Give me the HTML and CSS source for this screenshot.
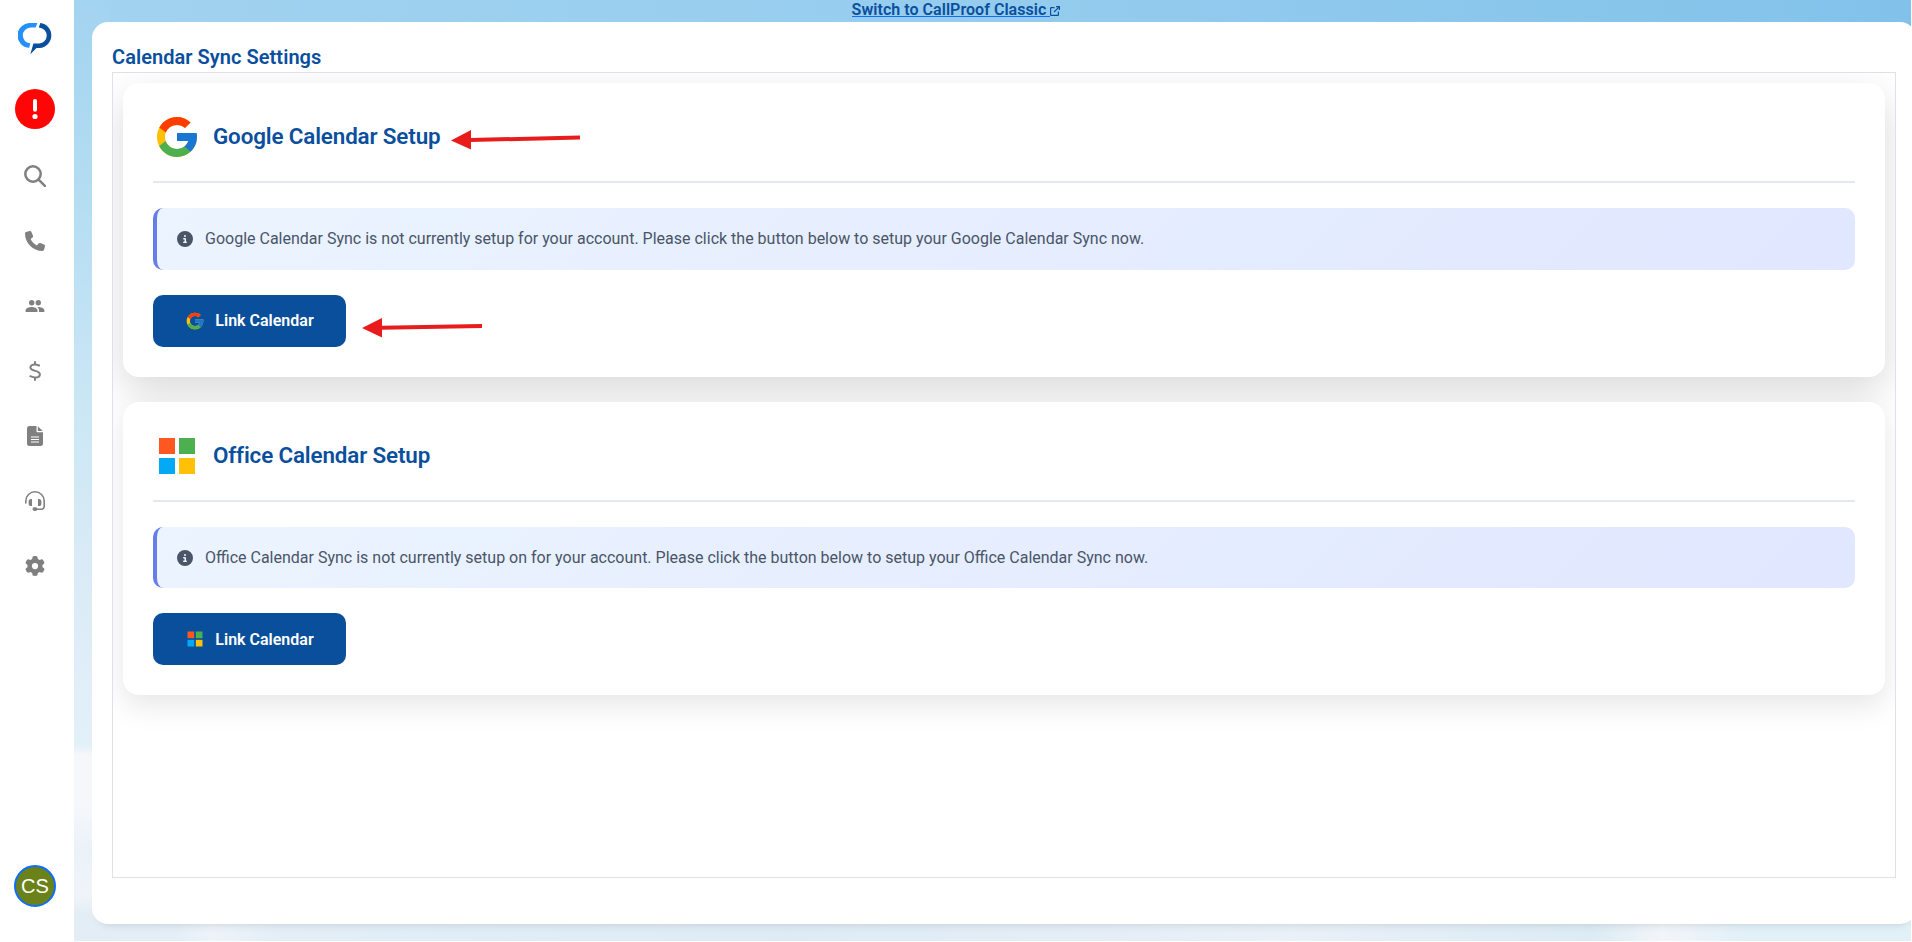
FILE: index.html
```html
<!DOCTYPE html>
<html lang="en">
<head>
    <meta charset="UTF-8">
    <meta name="viewport" content="width=device-width, initial-scale=1.0">
    <title>Calendar Sync Settings</title>
    <link rel="stylesheet" href="styles.css">
</head>
<body>

    <!-- shared icons -->
    <svg class="sprite" xmlns="http://www.w3.org/2000/svg">
        <symbol id="google" viewBox="0 0 48 48">
            <path fill="#FFC107" d="M43.611 20.083H42V20H24v8h11.303c-1.649 4.657-6.08 8-11.303 8-6.627 0-12-5.373-12-12s5.373-12 12-12c3.059 0 5.842 1.154 7.961 3.039l5.657-5.657C34.046 6.053 29.268 4 24 4 12.955 4 4 12.955 4 24s8.955 20 20 20 20-8.955 20-20c0-1.341-.138-2.65-.389-3.917z"/>
            <path fill="#FF3D00" d="M6.306 14.691l6.571 4.819C14.655 15.108 18.961 12 24 12c3.059 0 5.842 1.154 7.961 3.039l5.657-5.657C34.046 6.053 29.268 4 24 4 16.318 4 9.656 8.337 6.306 14.691z"/>
            <path fill="#4CAF50" d="M24 44c5.166 0 9.86-1.977 13.409-5.192l-6.19-5.238C29.211 35.091 26.715 36 24 36c-5.202 0-9.619-3.317-11.283-7.946l-6.522 5.025C9.505 39.556 16.227 44 24 44z"/>
            <path fill="#1976D2" d="M43.611 20.083H42V20H24v8h11.303c-.792 2.237-2.231 4.166-4.087 5.571l6.193 5.238C36.971 39.205 44 34 44 24c0-1.341-.138-2.65-.389-3.917z"/>
        </symbol>
        <symbol id="microsoft" viewBox="0 0 48 48">
            <path fill="#FF5722" d="M6 6h16v16H6z"/>
            <path fill="#4CAF50" d="M26 6h16v16H26z"/>
            <path fill="#03A9F4" d="M6 26h16v16H6z"/>
            <path fill="#FFC107" d="M26 26h16v16H26z"/>
        </symbol>
        <symbol id="info" viewBox="0 0 512 512">
            <path d="M256 512A256 256 0 1 0 256 0a256 256 0 1 0 0 512zM216 336h24V272H216c-13.300 0-24-10.700-24-24s10.700-24 24-24h48c13.300 0 24 10.700 24 24v88h8c13.300 0 24 10.700 24 24s-10.700 24-24 24H216c-13.300 0-24-10.700-24-24s10.700-24 24-24zm40-208a32 32 0 1 1 0 64 32 32 0 1 1 0-64z"/>
        </symbol>
    </svg>

    <aside class="sidebar">
        <a class="logo" href="#">
            <svg width="34" height="32" viewBox="0 0 34 32">
                <path d="M19.300 0L17.700 4.600H12.500A7.900 7.900 0 0 0 4.800 12.500A7.700 7.700 0 0 0 12.300 20.300L11.200 24.800A12.400 12.400 0 0 1 12.600 0Z" fill="#2490fb"/>
                <path d="M22.300 0A12.500 12.500 0 0 1 21.500 24.900H18.500L12.300 31.200L15.400 20.400H21.400A7.900 7.900 0 0 0 22 4.700L20.800 4.600Z" fill="#0a4f9e"/>
            </svg>
        </a>
        <a class="alert-badge" href="#">
            <svg width="40" height="40" viewBox="0 0 40 40">
                <path d="M20 12v8.800" stroke="#fff" stroke-width="4" stroke-linecap="round"/>
                <circle cx="20" cy="27.500" r="2.600" fill="#fff"/>
            </svg>
        </a>
        <nav class="nav">
            <a href="#"><svg class="line" width="22" height="22" viewBox="0 0 22 22" stroke-width="2.500"><circle cx="9" cy="9" r="7.700"/><path d="M14.600 14.600L21.200 21.200"/></svg></a>
            <a href="#"><svg width="20" height="20" viewBox="0 0 512 512"><path d="M164.900 24.600c-7.700-18.600-28-28.500-47.400-23.200l-88 24C12.100 30.200 0 46 0 64C0 311.400 200.600 512 448 512c18 0 33.800-12.100 38.600-29.500l24-88c5.300-19.400-4.600-39.700-23.200-47.400l-96-40c-16.300-6.800-35.200-2.100-46.300 11.600L304.700 368C234.300 334.700 177.300 277.700 144 207.300L193.300 167c13.700-11.200 18.400-30 11.600-46.300l-40-96z"/></svg></a>
            <a href="#"><svg width="20" height="14" viewBox="0 0 20 14"><circle cx="6.700" cy="3.700" r="2.700"/><circle cx="13.300" cy="3.700" r="2.700"/><path d="M6.700 7.900c2.200 0 5.800 1.100 5.800 3.400V13H.6V11.300C.6 9 4.500 7.900 6.700 7.900zM13.300 7.900c2.200 0 6.100 1.100 6.100 3.400V13H14V11.300c0-1.500-.8-2.600-1.900-3.300z"/></svg></a>
            <a href="#"><svg class="line" width="12" height="20" viewBox="0 0 12 20" stroke-width="2"><path d="M6 1v2.300M6 16.600v2.300M10 4.500C8.500 3.800 7.200 3.400 5.800 3.400C3.300 3.400 1.400 4.700 1.400 6.500C1.400 10.500 10.900 9.200 10.900 13.200C10.900 15.400 8.800 16.600 6.300 16.600C4.600 16.600 3 16 1.300 15.200"/></svg></a>
            <a href="#"><svg width="16" height="20" viewBox="0 0 16 20"><path d="M2.500 0H9.500V5.200A1 1 0 0 0 10.500 6.200H16V17.500A2.500 2.500 0 0 1 13.500 20H2.500A2.500 2.500 0 0 1 0 17.500V2.500A2.500 2.500 0 0 1 2.500 0Z"/><path d="M10.800.300L15.700 5H10.800Z"/><path d="M4 11h8M4 13.500h8M4 16h8" stroke="#fff" stroke-width="1.100"/></svg></a>
            <a href="#"><svg width="20" height="20" viewBox="0 0 20 20"><path d="M.8 12V10a9.200 9.200 0 0 1 18.400 0V15.500a2.700 2.700 0 0 1-2.700 2.700H10" fill="none" stroke="#808080" stroke-width="1.600" stroke-linecap="round"/><path d="M6.200 8h.8v7H6.200a2.600 2.600 0 0 1-2.600-2.600V10.600A2.600 2.600 0 0 1 6.200 8zM13.800 8H13v7h.8a2.600 2.600 0 0 0 2.600-2.600V10.600A2.600 2.600 0 0 0 13.800 8z"/><rect x="7.500" y="16.300" width="5" height="3.600" rx="1.800"/></svg></a>
            <a href="#"><svg width="20" height="20" viewBox="0 0 512 512"><path d="M495.900 166.600c3.200 8.700.5 18.400-6.400 24.600l-43.300 39.400c1.100 8.300 1.700 16.800 1.700 25.400s-.6 17.100-1.700 25.400l43.300 39.400c6.900 6.200 9.600 15.900 6.400 24.600c-4.400 11.900-9.700 23.300-15.800 34.300l-4.700 8.100c-6.600 11-14 21.400-22.100 31.200c-5.900 7.200-15.700 9.600-24.500 6.800l-55.700-17.700c-13.400 10.300-28.200 18.900-44 25.400l-12.500 57.100c-2 9.100-9 16.300-18.200 17.800c-13.800 2.300-28 3.500-42.500 3.500s-28.700-1.200-42.500-3.500c-9.200-1.500-16.200-8.700-18.200-17.800l-12.500-57.100c-15.800-6.500-30.600-15.100-44-25.400L83.100 425.900c-8.800 2.800-18.600.3-24.500-6.800c-8.100-9.800-15.500-20.200-22.100-31.200l-4.700-8.100c-6.100-11-11.400-22.400-15.800-34.300c-3.200-8.700-.5-18.400 6.400-24.600l43.300-39.400C64.600 273.100 64 264.600 64 256s.6-17.100 1.700-25.400L22.400 191.200c-6.900-6.200-9.600-15.900-6.400-24.600c4.400-11.900 9.700-23.300 15.800-34.300l4.700-8.100c6.600-11 14-21.400 22.100-31.200c5.900-7.200 15.700-9.600 24.500-6.800l55.700 17.700c13.400-10.300 28.200-18.900 44-25.400l12.500-57.100c2-9.100 9-16.300 18.200-17.800C227.300 1.200 241.500 0 256 0s28.700 1.200 42.500 3.500c9.200 1.500 16.200 8.700 18.200 17.800l12.500 57.100c15.800 6.500 30.600 15.100 44 25.400l55.700-17.700c8.800-2.800 18.600-.3 24.500 6.800c8.100 9.800 15.500 20.200 22.100 31.200l4.700 8.100c6.100 11 11.400 22.400 15.800 34.300zM256 336a80 80 0 1 0 0-160 80 80 0 1 0 0 160z"/></svg></a>
        </nav>
        <div class="avatar">CS</div>
    </aside>

    <div class="main">
        <div class="topbar">
            <a class="classic-link" href="#"><span>Switch to CallProof Classic </span><svg width="10" height="10" viewBox="0 0 10 10" fill="none" stroke="#0a4f9e" stroke-width="1.200"><path d="M4.500 1.600H1.200Q.6 1.600.6 2.200V8.800Q.6 9.400 1.200 9.400H7.800Q8.400 9.400 8.400 8.800V5.500M6 .6H9.400V4M9.200.8L4 6"/></svg></a>
        </div>

        <div class="panel">
            <h1>Calendar Sync Settings</h1>
            <div class="content">

                <section class="card active">
                    <div class="card-header">
                        <svg width="48" height="48"><use href="#google"/></svg>
                        <h2>Google Calendar Setup</h2>
                        <svg class="arrow arrow-title" width="130" height="22" viewBox="0 0 130 22">
                            <path d="M19 12L129 9.500" stroke="#e81c1c" stroke-width="4"/>
                            <path d="M0 12.500L20 2V21.500Z" fill="#e81c1c"/>
                        </svg>
                    </div>
                    <div class="notice">
                        <svg width="16" height="16"><use href="#info"/></svg>
                        <span>Google Calendar Sync is not currently setup for your account. Please click the button below to setup your Google Calendar Sync now.</span>
                    </div>
                    <div class="actions">
                        <button type="button"><svg width="20" height="20"><use href="#google"/></svg>Link Calendar</button>
                        <svg class="arrow arrow-button" width="120" height="22" viewBox="0 0 120 22">
                            <path d="M19 11.700L120 10" stroke="#e81c1c" stroke-width="4"/>
                            <path d="M0 12L20 2V21.500Z" fill="#e81c1c"/>
                        </svg>
                    </div>
                </section>

                <section class="card">
                    <div class="card-header">
                        <svg width="48" height="48"><use href="#microsoft"/></svg>
                        <h2>Office Calendar Setup</h2>
                    </div>
                    <div class="notice">
                        <svg width="16" height="16"><use href="#info"/></svg>
                        <span>Office Calendar Sync is not currently setup on for your account. Please click the button below to setup your Office Calendar Sync now.</span>
                    </div>
                    <div class="actions">
                        <button type="button"><svg width="20" height="20"><use href="#microsoft"/></svg>Link Calendar</button>
                    </div>
                </section>

            </div>
        </div>
    </div>

</body>
</html>
```
FILE: styles.css
```css
* {
    box-sizing: border-box;
}

body {
    margin: 0;
    height: 942px;
    display: flex;
    overflow: hidden;
    font-family: Roboto, "Liberation Sans", sans-serif;
    font-size: 16px;
    background-color: white;
}

svg {
    display: block;
    flex-shrink: 0;
}

.sprite {
    display: none;
}

/* sidebar */
.sidebar {
    width: 74px;
    flex-shrink: 0;
    padding: 23px 17px 35px 13px;
    display: flex;
    flex-direction: column;
    align-items: center;
    background-color: white;
}

.alert-badge {
    margin-top: 34px;
    width: 40px;
    height: 40px;
    border-radius: 50%;
    background-color: #ff0505;
}

.nav {
    margin-top: 14px;
    display: flex;
    flex-direction: column;
}

.nav a {
    height: 65px;
    display: flex;
    align-items: center;
    justify-content: center;
}

.nav svg {
    fill: #808080;
}

.nav .line {
    fill: none;
    stroke: #808080;
    stroke-linecap: round;
    stroke-linejoin: round;
}

.avatar {
    margin-top: auto;
    width: 42px;
    height: 42px;
    flex-shrink: 0;
    border: 2px solid #0d6efd;
    border-radius: 50%;
    background-color: #6a8219;
    color: white;
    font-family: "Liberation Sans", sans-serif;
    font-size: 20px;
    line-height: 39px;
    text-align: center;
}

/* sky background */
.main {
    width: 1837px;
    height: 941px;
    flex-shrink: 0;
    overflow: hidden;
    background:
        linear-gradient(to right, #e2edf6 0, #e3eef7 80px, #eef3f9 120px, #e3eef7 190px, #deebf5 700px, #e9f0f8 1200px, #dcebf4 1500px, #f2f5fa 1570px, #e2f0f8 1650px, #e2f0f8 100%) 18px 100% / 100% 24px no-repeat,
        linear-gradient(to bottom, #a2d3f0 0, #aedaf1 130px, #bee1f4 290px, #c5e4f5 350px, #cde8f5 430px, #dcecf7 600px, #e2f0f8 745px, #f6f7fb 755px, #f6f7fb 805px, #eaf2f8 850px, #f0f4f9 895px, #e2edf6 915px) 0 0 / 36px 100% no-repeat,
        linear-gradient(to right, #a2d3f0, #95ccee 50%, #82c2ea);
}

.topbar {
    height: 22px;
    padding-right: 73px;
    display: flex;
    justify-content: center;
}

.classic-link {
    height: 19px;
    display: flex;
    align-items: flex-end;
    color: #0a4f9e;
    font-weight: 600;
    text-decoration: none;
}

.classic-link span {
    height: 17px;
    margin-bottom: 2px;
    line-height: 19px;
    letter-spacing: 0.04px;
    white-space: pre;
    border-bottom: 1px solid #0d6efd;
}

.classic-link svg {
    margin-bottom: 3px;
}

.panel {
    width: 1824px;
    height: 902px;
    margin-left: 18px;
    padding: 20px 20px 0;
    border-radius: 16px;
    background-color: white;
    box-shadow: 0 8px 10px -8px rgba(0, 0, 0, 0.15);
}

h1 {
    margin: 0;
    height: 30px;
    color: #0a4f9e;
    font-size: 20px;
    font-weight: 600;
    line-height: 30px;
    letter-spacing: 0.05px;
}

.content {
    height: 806px;
    padding: 10px;
    overflow: hidden;
    border: 1px solid #dee2e6;
}

.card {
    margin-bottom: 25px;
    padding: 30px;
    border-radius: 16px;
    background-color: white;
    box-shadow: 0 10px 30px rgba(0, 0, 0, 0.1);
}

.card.active {
    box-shadow: 0 15px 40px rgba(0, 0, 0, 0.15);
}

.card-header {
    position: relative;
    display: flex;
    gap: 12px;
    margin-bottom: 25px;
    padding-bottom: 20px;
    border-bottom: 2px solid #e2e8f0;
}

h2 {
    margin: 0;
    color: #0a4f9e;
    font-size: 22.4px;
    font-weight: 600;
    line-height: 47px;
    letter-spacing: -0.14px;
}

.notice {
    display: flex;
    align-items: center;
    gap: 12px;
    margin-bottom: 25px;
    padding: 20px;
    border-left: 4px solid #667eea;
    border-radius: 10px;
    background: linear-gradient(135deg, #ebf4ff 0%, #e0e7ff 100%);
    color: #4a5568;
    line-height: 21.7px;
}

.notice svg {
    fill: #4a5568;
}

.actions {
    position: relative;
    display: flex;
}

button {
    height: 52px;
    width: 193px;
    display: flex;
    align-items: center;
    justify-content: center;
    gap: 10px;
    padding: 0;
    border: none;
    border-radius: 10px;
    background-color: #0a4f9b;
    color: white;
    font-family: inherit;
    font-size: 16px;
    font-weight: 600;
    cursor: pointer;
}

/* pointer arrows drawn over the first card */
.arrow {
    position: absolute;
}

.arrow-title {
    left: 298px;
    top: 15px;
}

.arrow-button {
    left: 209px;
    top: 21px;
}
```
